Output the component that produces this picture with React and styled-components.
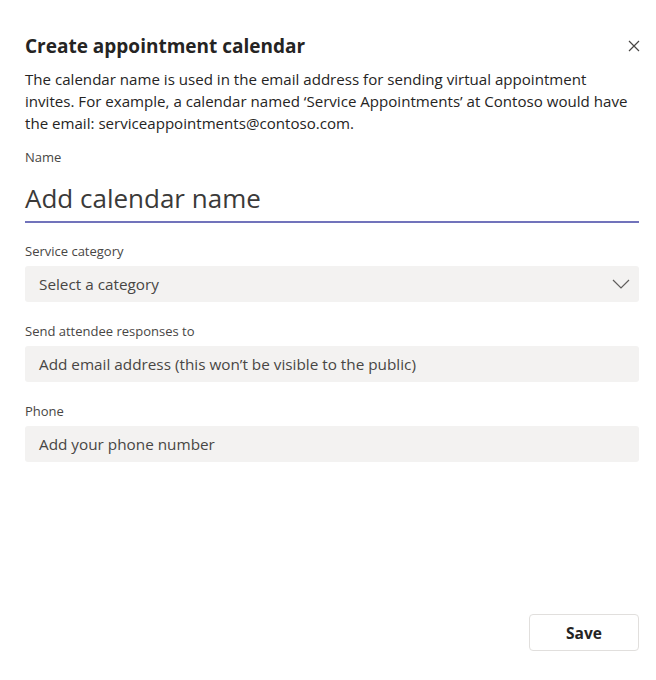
import React from "react";
import styled, { createGlobalStyle } from "styled-components";

const Global = createGlobalStyle`
  html, body { margin: 0; padding: 0; background: #fff; }
  body { font-family: "Open Sans", "Noto Sans", sans-serif; color: #252423; }
  * { box-sizing: border-box; }
`;

const Dialog = styled.div`
  width: 656px;
  height: 680px;
  padding: 34px 17px 29px 25px;
  display: flex;
  flex-direction: column;
`;

const Header = styled.div`
  display: flex;
  justify-content: space-between;
  align-items: center;
`;

const Title = styled.h1`
  margin: 0;
  font-size: 19px;
  font-weight: 700;
  line-height: 24px;
  color: #252423;
`;

const CloseButton = styled.button`
  border: none;
  background: none;
  padding: 0;
  width: 20px;
  height: 20px;
  display: flex;
  align-items: center;
  justify-content: center;
  margin-right: -5px;
  cursor: pointer;
`;

const Description = styled.p`
  margin: 10px 0 0;
  font-size: 15.1px;
  line-height: 22px;
  color: #252423;
`;

const Field = styled.div`
  display: flex;
  flex-direction: column;
  margin-top: ${(p) => p.$top}px;
`;

const Label = styled.label`
  font-size: 13px;
  line-height: 16px;
  color: #484644;
`;

const NameInput = styled.div`
  margin-top: 15px;
  font-size: 26px;
  line-height: 36px;
  color: #3b3a39;
  padding-bottom: 5px;
  border-bottom: 2px solid #7173bb;
`;

const Box = styled.div`
  margin-top: 7px;
  height: 36px;
  background: #f3f2f1;
  border-radius: 3px;
  padding: 0 9px 0 14px;
  display: flex;
  align-items: center;
  justify-content: space-between;
  font-size: 15.3px;
  color: #484644;
`;

const Spacer = styled.div`
  flex: 1;
`;

const Footer = styled.div`
  display: flex;
  justify-content: flex-end;
`;

const SaveButton = styled.button`
  width: 110px;
  height: 37px;
  border: 1px solid #e1dfdd;
  border-radius: 4px;
  background: #fff;
  font-family: inherit;
  font-size: 15.5px;
  font-weight: 700;
  color: #252423;
`;

export default function App() {
  return (
    <>
      <Global />
      <Dialog>
        <Header>
          <Title>Create appointment calendar</Title>
          <CloseButton aria-label="Close">
            <svg width="12" height="12" viewBox="0 0 12 12">
              <path d="M1 1 L11 11 M11 1 L1 11" stroke="#484644" strokeWidth="1.2" fill="none" />
            </svg>
          </CloseButton>
        </Header>
        <Description>
          The calendar name is used in the email address for sending virtual appointment
          <br />
          invites. For example, a calendar named ‘Service Appointments’ at Contoso would have
          <br />
          the email: serviceappointments@contoso.com.
        </Description>
        <Field $top={15}>
          <Label>Name</Label>
          <NameInput>Add calendar name</NameInput>
        </Field>
        <Field $top={20}>
          <Label>Service category</Label>
          <Box>
            <span>Select a category</span>
            <svg width="18" height="10" viewBox="0 0 18 10">
              <path d="M1 1 L9 9 L17 1" stroke="#605e5c" strokeWidth="1.2" fill="none" />
            </svg>
          </Box>
        </Field>
        <Field $top={21}>
          <Label>Send attendee responses to</Label>
          <Box>Add email address (this won’t be visible to the public)</Box>
        </Field>
        <Field $top={21}>
          <Label>Phone</Label>
          <Box>Add your phone number</Box>
        </Field>
        <Spacer />
        <Footer>
          <SaveButton>Save</SaveButton>
        </Footer>
      </Dialog>
    </>
  );
}
